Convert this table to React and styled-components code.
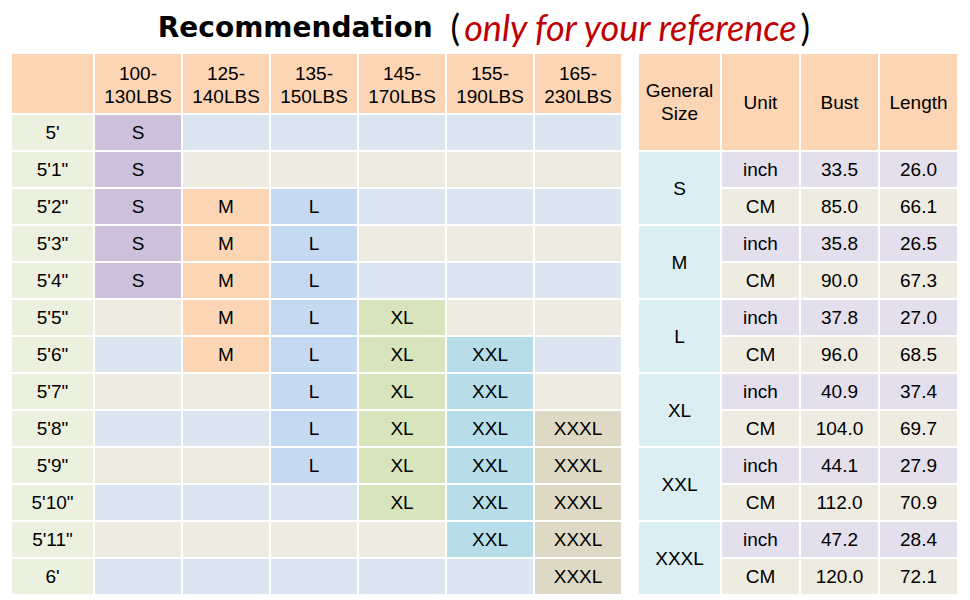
import React from 'react';
import styled, { createGlobalStyle } from 'styled-components';

const GlobalStyle = createGlobalStyle`
  body {
    margin: 0;
    background: #ffffff;
    font-family: "Liberation Sans", Arial, sans-serif;
  }
`;

const SIZE_COLORS = {
  S: '#CCC0DA',
  M: '#FCD5B4',
  L: '#C5D9F1',
  XL: '#D8E4BC',
  XXL: '#B7DEE8',
  XXXL: '#DDD9C4',
};

const Page = styled.div`
  width: 970px;
  height: 600px;
  display: flex;
  flex-direction: column;
`;

const Title = styled.h1`
  margin: 0;
  height: 54px;
  display: flex;
  align-items: center;
  justify-content: center;
  gap: 14px;
  padding-left: 2px;
  box-sizing: border-box;
`;

const TitleMain = styled.span`
  font-family: "DejaVu Sans", sans-serif;
  font-weight: bold;
  font-size: 28px;
  color: #000;
`;

const TitleNote = styled.span`
  font-family: "Lato", "Open Sans", sans-serif;
  font-style: italic;
  font-weight: normal;
  font-size: 36px;
  color: #C00000;
`;

const Paren = styled.span`
  font-family: "Lato", sans-serif;
  font-weight: normal;
  font-size: 36px;
  color: #000;
  margin: 0 4px;
`;

const Tables = styled.div`
  display: flex;
  gap: 18px;
  padding-left: 12px;
`;

const Grid = styled.div`
  display: grid;
  grid-template-columns: ${({ $cols }) => $cols};
  grid-template-rows: ${({ $rows }) => $rows};
  gap: 2px;
  background: #ffffff;
`;

const Cell = styled.div`
  display: flex;
  align-items: center;
  justify-content: center;
  text-align: center;
  background: ${({ $bg }) => $bg};
  font-size: 19px;
  line-height: 23px;
  color: #000;
  grid-row: ${({ $span }) => ($span ? `span ${$span}` : 'auto')};
`;

const HeadCell = styled(Cell)`
  background: #FCD5B4;
  padding-top: ${({ $pt }) => $pt || 0}px;
`;

const weights = ['100-130LBS', '125-140LBS', '135-150LBS', '145-170LBS', '155-190LBS', '165-230LBS'];

const heights = [
  ["5'", ['S']],
  ["5'1\"", ['S']],
  ["5'2\"", ['S', 'M', 'L']],
  ["5'3\"", ['S', 'M', 'L']],
  ["5'4\"", ['S', 'M', 'L']],
  ["5'5\"", ['', 'M', 'L', 'XL']],
  ["5'6\"", ['', 'M', 'L', 'XL', 'XXL']],
  ["5'7\"", ['', '', 'L', 'XL', 'XXL']],
  ["5'8\"", ['', '', 'L', 'XL', 'XXL', 'XXXL']],
  ["5'9\"", ['', '', 'L', 'XL', 'XXL', 'XXXL']],
  ["5'10\"", ['', '', '', 'XL', 'XXL', 'XXXL']],
  ["5'11\"", ['', '', '', '', 'XXL', 'XXXL']],
  ["6'", ['', '', '', '', '', 'XXXL']],
];

const measures = [
  ['S', ['33.5', '26.0'], ['85.0', '66.1']],
  ['M', ['35.8', '26.5'], ['90.0', '67.3']],
  ['L', ['37.8', '27.0'], ['96.0', '68.5']],
  ['XL', ['40.9', '37.4'], ['104.0', '69.7']],
  ['XXL', ['44.1', '27.9'], ['112.0', '70.9']],
  ['XXXL', ['47.2', '28.4'], ['120.0', '72.1']],
];

const HeightTable = () => (
  <Grid $cols="81px repeat(6, 86px)" $rows="59px repeat(13, 35px)">
    <HeadCell />
    {weights.map((w) => (
      <HeadCell key={w} $pt={2}>
        {w.split('-')[0]}-<br />
        {w.split('-')[1]}
      </HeadCell>
    ))}
    {heights.map(([h, sizes], i) => {
      const rowBg = i % 2 === 0 ? '#DCE6F1' : '#EEECE1';
      return (
        <React.Fragment key={h}>
          <Cell $bg="#EBF1DE">{h}</Cell>
          {weights.map((w, j) => {
            const s = sizes[j];
            return (
              <Cell key={w} $bg={s ? SIZE_COLORS[s] : rowBg}>
                {s}
              </Cell>
            );
          })}
        </React.Fragment>
      );
    })}
  </Grid>
);

const MeasureTable = () => (
  <Grid $cols="81px 77px 77px 77px" $rows="96px repeat(12, 35px)">
    <HeadCell>
      General
      <br />
      Size
    </HeadCell>
    <HeadCell>Unit</HeadCell>
    <HeadCell>Bust</HeadCell>
    <HeadCell>Length</HeadCell>
    {measures.map(([size, inch, cm]) => (
      <React.Fragment key={size}>
        <Cell $bg="#DAEEF3" $span={2}>{size}</Cell>
        <Cell $bg="#E4DFEC">inch</Cell>
        <Cell $bg="#E4DFEC">{inch[0]}</Cell>
        <Cell $bg="#E4DFEC">{inch[1]}</Cell>
        <Cell $bg="#EEECE1">CM</Cell>
        <Cell $bg="#EEECE1">{cm[0]}</Cell>
        <Cell $bg="#EEECE1">{cm[1]}</Cell>
      </React.Fragment>
    ))}
  </Grid>
);

export default function App() {
  return (
    <Page>
      <GlobalStyle />
      <Title>
        <TitleMain>Recommendation</TitleMain>
        <span>
          <Paren>(</Paren>
          <TitleNote>only for your reference</TitleNote>
          <Paren>)</Paren>
        </span>
      </Title>
      <Tables>
        <HeightTable />
        <MeasureTable />
      </Tables>
    </Page>
  );
}
